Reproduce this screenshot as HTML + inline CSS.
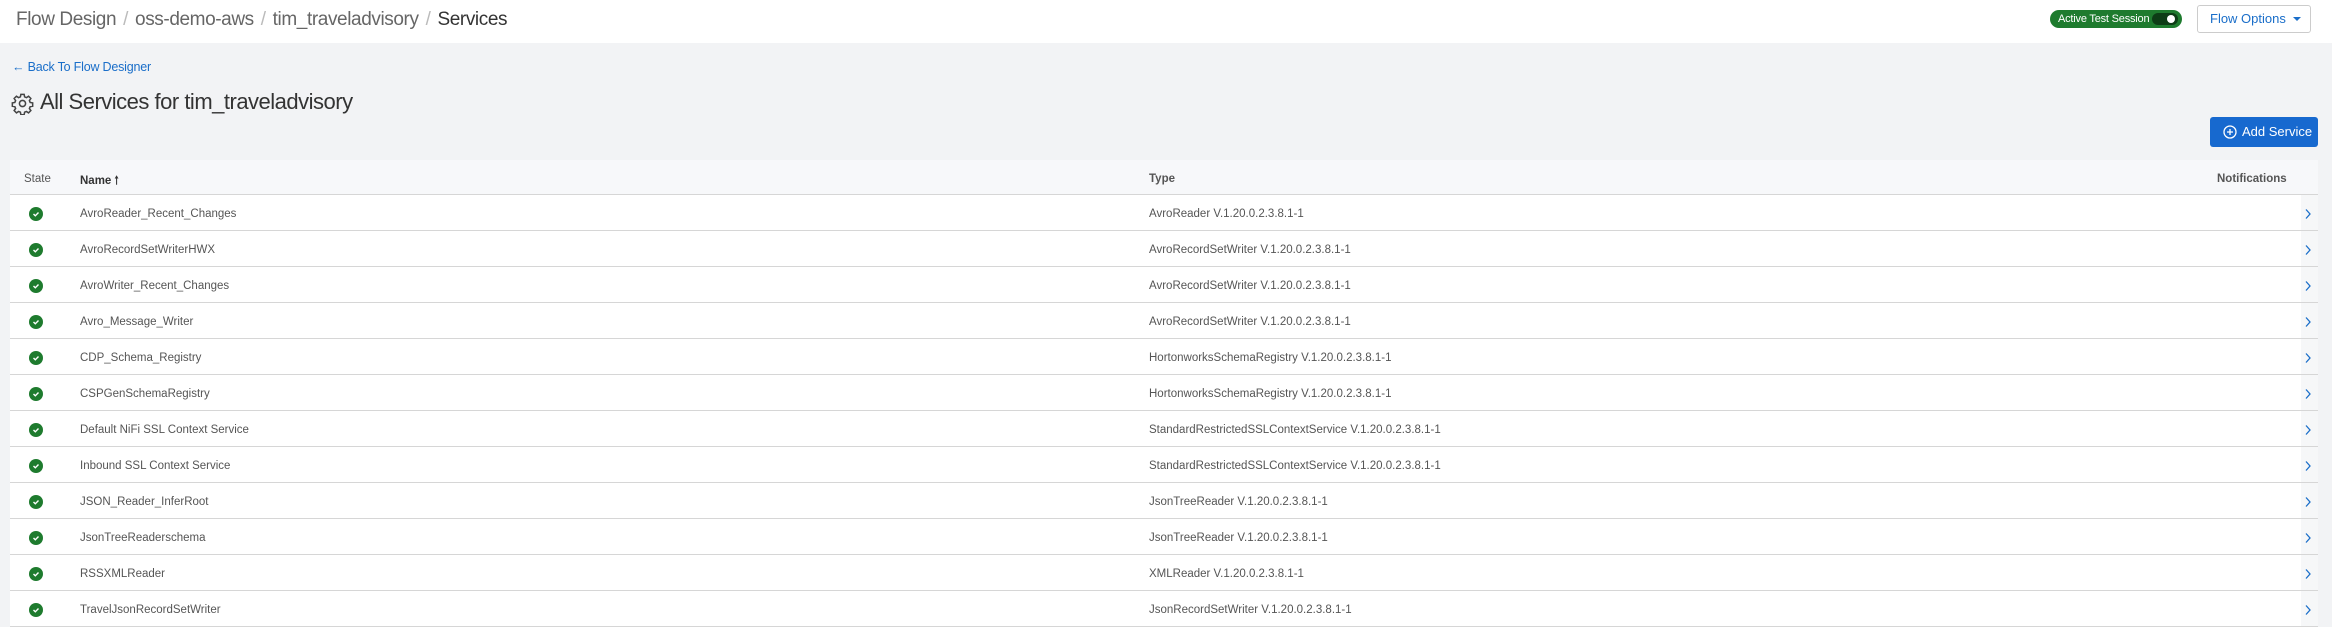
<!DOCTYPE html>
<html><head><meta charset="utf-8"><style>
*{box-sizing:border-box;margin:0;padding:0}
body{width:2332px;height:626px;overflow:hidden;background:#f2f3f5;font-family:"Liberation Sans",sans-serif;color:#444;position:relative}
.hdr{position:absolute;left:0;top:0;width:2332px;height:43px;background:#fff}
.bc{position:absolute;left:16px;top:9px;font-size:19px;color:#666;letter-spacing:-0.4px;white-space:nowrap}
.bc .s{color:#bbb;margin:0 7px}
.bc .cur{color:#333}
.pill{position:absolute;left:2050px;top:10px;width:132px;height:18px;border-radius:9px;background:#1e7b2e;color:#fff;font-size:11px;line-height:18px;padding-left:8px;letter-spacing:-0.2px}
.tog{position:absolute;right:4px;top:3px;width:26px;height:12px;border-radius:6px;background:#0d3d16}
.tog:after{content:"";position:absolute;right:3px;top:2px;width:8px;height:8px;border-radius:50%;background:#fff}
.fo{position:absolute;left:2197px;top:5px;width:114px;height:28px;border:1px solid #ccc;border-radius:3px;color:#1a6ec9;font-size:13px;line-height:26px;padding-left:12px}
.fo:after{content:"";position:absolute;left:95px;top:11px;border-left:4px solid transparent;border-right:4px solid transparent;border-top:4px solid #1a6ec9}
.back{position:absolute;left:12px;top:60px;font-size:12.5px;color:#1a6ec9;letter-spacing:-0.2px}
.title{position:absolute;left:40px;top:89px;font-size:22px;color:#333;letter-spacing:-0.5px}
.gear{position:absolute;left:11px;top:92px}
.add{position:absolute;left:2210px;top:117px;width:108px;height:30px;background:#1769cf;border-radius:3px;color:#fff;font-size:13px;line-height:30px;padding-left:32px}
.add svg{position:absolute;left:13px;top:8px}
.tbl{position:absolute;left:10px;top:160px;width:2308px}
.th{height:35px;background:#f7f8fa;border-bottom:1px solid #d6d6d6;position:relative;font-size:11.5px}
.row{height:36px;background:#fff;border-bottom:1px solid #d6d6d6;position:relative;font-size:11.5px;color:#555}
.row:after{content:"";position:absolute;right:0;top:0;width:17px;height:35px;background:#f6f7f8}
.c1{position:absolute;left:14px;top:13px;color:#555}
.c2{position:absolute;left:70px;top:13px}
.c3{position:absolute;left:1139px;top:13px}
.c4{position:absolute;left:2207px;top:13px;color:#555;font-weight:bold}
.chk{position:absolute;left:19px;top:12px;width:14px;height:14px;border-radius:50%;background:#1e7b2e}
.chk svg{position:absolute;left:3px;top:3px}
.chev{position:absolute;left:2294px;top:13px;z-index:2}
</style></head><body>
<div class="hdr">
<div class="bc">Flow Design<span class="s">/</span>oss-demo-aws<span class="s">/</span>tim_traveladvisory<span class="s">/</span><span class="cur">Services</span></div>
<div class="pill">Active Test Session<div class="tog"></div></div>
<div class="fo">Flow Options</div>
</div>
<div class="back">← Back To Flow Designer</div>
<svg class="gear" width="23" height="23" viewBox="0 0 24 24" fill="none" stroke="#444" stroke-width="1.6"><circle cx="12" cy="12" r="3.2"/><path d="M10.3 2.5h3.4l.5 2.6 1.9.8 2.2-1.5 2.4 2.4-1.5 2.2.8 1.9 2.6.5v3.4l-2.6.5-.8 1.9 1.5 2.2-2.4 2.4-2.2-1.5-1.900.8-.5 2.6h-3.4l-.5-2.6-1.9-.8-2.2 1.5-2.4-2.4 1.5-2.2-.8-1.9-2.6-.5v-3.4l2.6-.5.8-1.9-1.5-2.2 2.4-2.4 2.2 1.5 1.9-.8z"/></svg>
<div class="title">All Services for tim_traveladvisory</div>
<div class="add"><svg width="14" height="14" viewBox="0 0 14 14" fill="none" stroke="#fff" stroke-width="1.3"><circle cx="7" cy="7" r="6"/><path d="M7 4v6M4 7h6"/></svg>Add Service</div>
<div class="tbl">
<div class="th"><span class="c1">State</span><span class="c2" style="font-weight:bold;color:#333">Name 🠑</span><span class="c3" style="font-weight:bold;color:#555">Type</span><span class="c4">Notifications</span></div>
<div class="row"><span class="chk"><svg width="8" height="8" viewBox="0 0 8 8"><path d="M1.5 4l1.8 1.8L6.5 2.5" stroke="#fff" stroke-width="1.4" fill="none"/></svg></span><span class="c2">AvroReader_Recent_Changes</span><span class="c3">AvroReader V.1.20.0.2.3.8.1-1</span><svg class="chev" width="8" height="12" viewBox="0 0 8 12"><path d="M2 1.5l4 4.5-4 4.5" stroke="#1a6ec9" stroke-width="1.3" fill="none"/></svg></div>
<div class="row"><span class="chk"><svg width="8" height="8" viewBox="0 0 8 8"><path d="M1.5 4l1.8 1.8L6.5 2.5" stroke="#fff" stroke-width="1.4" fill="none"/></svg></span><span class="c2">AvroRecordSetWriterHWX</span><span class="c3">AvroRecordSetWriter V.1.20.0.2.3.8.1-1</span><svg class="chev" width="8" height="12" viewBox="0 0 8 12"><path d="M2 1.5l4 4.5-4 4.5" stroke="#1a6ec9" stroke-width="1.3" fill="none"/></svg></div>
<div class="row"><span class="chk"><svg width="8" height="8" viewBox="0 0 8 8"><path d="M1.5 4l1.8 1.8L6.5 2.5" stroke="#fff" stroke-width="1.4" fill="none"/></svg></span><span class="c2">AvroWriter_Recent_Changes</span><span class="c3">AvroRecordSetWriter V.1.20.0.2.3.8.1-1</span><svg class="chev" width="8" height="12" viewBox="0 0 8 12"><path d="M2 1.5l4 4.5-4 4.5" stroke="#1a6ec9" stroke-width="1.3" fill="none"/></svg></div>
<div class="row"><span class="chk"><svg width="8" height="8" viewBox="0 0 8 8"><path d="M1.5 4l1.8 1.8L6.5 2.5" stroke="#fff" stroke-width="1.4" fill="none"/></svg></span><span class="c2">Avro_Message_Writer</span><span class="c3">AvroRecordSetWriter V.1.20.0.2.3.8.1-1</span><svg class="chev" width="8" height="12" viewBox="0 0 8 12"><path d="M2 1.5l4 4.5-4 4.5" stroke="#1a6ec9" stroke-width="1.3" fill="none"/></svg></div>
<div class="row"><span class="chk"><svg width="8" height="8" viewBox="0 0 8 8"><path d="M1.5 4l1.8 1.8L6.5 2.5" stroke="#fff" stroke-width="1.4" fill="none"/></svg></span><span class="c2">CDP_Schema_Registry</span><span class="c3">HortonworksSchemaRegistry V.1.20.0.2.3.8.1-1</span><svg class="chev" width="8" height="12" viewBox="0 0 8 12"><path d="M2 1.5l4 4.5-4 4.5" stroke="#1a6ec9" stroke-width="1.3" fill="none"/></svg></div>
<div class="row"><span class="chk"><svg width="8" height="8" viewBox="0 0 8 8"><path d="M1.5 4l1.8 1.8L6.5 2.5" stroke="#fff" stroke-width="1.4" fill="none"/></svg></span><span class="c2">CSPGenSchemaRegistry</span><span class="c3">HortonworksSchemaRegistry V.1.20.0.2.3.8.1-1</span><svg class="chev" width="8" height="12" viewBox="0 0 8 12"><path d="M2 1.5l4 4.5-4 4.5" stroke="#1a6ec9" stroke-width="1.3" fill="none"/></svg></div>
<div class="row"><span class="chk"><svg width="8" height="8" viewBox="0 0 8 8"><path d="M1.5 4l1.8 1.8L6.5 2.5" stroke="#fff" stroke-width="1.4" fill="none"/></svg></span><span class="c2">Default NiFi SSL Context Service</span><span class="c3">StandardRestrictedSSLContextService V.1.20.0.2.3.8.1-1</span><svg class="chev" width="8" height="12" viewBox="0 0 8 12"><path d="M2 1.5l4 4.5-4 4.5" stroke="#1a6ec9" stroke-width="1.3" fill="none"/></svg></div>
<div class="row"><span class="chk"><svg width="8" height="8" viewBox="0 0 8 8"><path d="M1.5 4l1.8 1.8L6.5 2.5" stroke="#fff" stroke-width="1.4" fill="none"/></svg></span><span class="c2">Inbound SSL Context Service</span><span class="c3">StandardRestrictedSSLContextService V.1.20.0.2.3.8.1-1</span><svg class="chev" width="8" height="12" viewBox="0 0 8 12"><path d="M2 1.5l4 4.5-4 4.5" stroke="#1a6ec9" stroke-width="1.3" fill="none"/></svg></div>
<div class="row"><span class="chk"><svg width="8" height="8" viewBox="0 0 8 8"><path d="M1.5 4l1.8 1.8L6.5 2.5" stroke="#fff" stroke-width="1.4" fill="none"/></svg></span><span class="c2">JSON_Reader_InferRoot</span><span class="c3">JsonTreeReader V.1.20.0.2.3.8.1-1</span><svg class="chev" width="8" height="12" viewBox="0 0 8 12"><path d="M2 1.5l4 4.5-4 4.5" stroke="#1a6ec9" stroke-width="1.3" fill="none"/></svg></div>
<div class="row"><span class="chk"><svg width="8" height="8" viewBox="0 0 8 8"><path d="M1.5 4l1.8 1.8L6.5 2.5" stroke="#fff" stroke-width="1.4" fill="none"/></svg></span><span class="c2">JsonTreeReaderschema</span><span class="c3">JsonTreeReader V.1.20.0.2.3.8.1-1</span><svg class="chev" width="8" height="12" viewBox="0 0 8 12"><path d="M2 1.5l4 4.5-4 4.5" stroke="#1a6ec9" stroke-width="1.3" fill="none"/></svg></div>
<div class="row"><span class="chk"><svg width="8" height="8" viewBox="0 0 8 8"><path d="M1.5 4l1.8 1.8L6.5 2.5" stroke="#fff" stroke-width="1.4" fill="none"/></svg></span><span class="c2">RSSXMLReader</span><span class="c3">XMLReader V.1.20.0.2.3.8.1-1</span><svg class="chev" width="8" height="12" viewBox="0 0 8 12"><path d="M2 1.5l4 4.5-4 4.5" stroke="#1a6ec9" stroke-width="1.3" fill="none"/></svg></div>
<div class="row"><span class="chk"><svg width="8" height="8" viewBox="0 0 8 8"><path d="M1.5 4l1.8 1.8L6.5 2.5" stroke="#fff" stroke-width="1.4" fill="none"/></svg></span><span class="c2">TravelJsonRecordSetWriter</span><span class="c3">JsonRecordSetWriter V.1.20.0.2.3.8.1-1</span><svg class="chev" width="8" height="12" viewBox="0 0 8 12"><path d="M2 1.5l4 4.5-4 4.5" stroke="#1a6ec9" stroke-width="1.3" fill="none"/></svg></div>
</div>
</body></html>
